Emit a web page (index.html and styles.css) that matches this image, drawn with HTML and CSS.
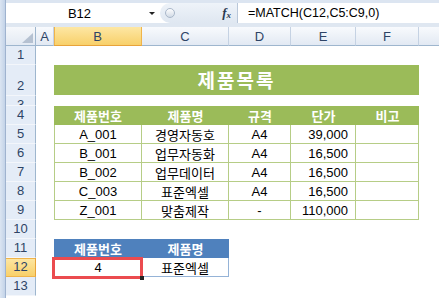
FILE: index.html
```html
<!DOCTYPE html>
<html lang="ko">
<head>
    <meta charset="UTF-8">
    <meta name="viewport" content="width=device-width, initial-scale=1.0">
    <title>제품목록 - MATCH</title>
    <link rel="stylesheet" href="styles.css">
</head>
<body>
    <div class="window">
        <div class="frame-edge"></div>
        <div class="workbook">
            <div class="top-line"></div>
            <div class="formula-bar">
                <div class="name-box">
                    <span class="cell-ref">B12</span>
                    <span class="drop"></span>
                </div>
                <div class="fx-area">
                    <span class="grip"></span>
                    <span class="fx">f<sub>x</sub></span>
                </div>
                <div class="formula-input">=MATCH(C12,C5:C9,0)</div>
            </div>
            <div class="bar-gap"></div>

            <div class="sheet">
                <!-- column headers -->
                <div class="corner"><span class="corner-tri"></span></div>
                <div class="col-head">A</div>
                <div class="col-head selected">B</div>
                <div class="col-head">C</div>
                <div class="col-head">D</div>
                <div class="col-head">E</div>
                <div class="col-head">F</div>
                <div class="col-head last"></div>

                <!-- row 1 -->
                <div class="row-head">1</div>
                <div class="c"></div><div class="c"></div><div class="c"></div><div class="c"></div><div class="c"></div><div class="c"></div><div class="c"></div>

                <!-- row 2 -->
                <div class="row-head">2</div>
                <div class="c"></div>
                <div class="title">제품목록</div>
                <div class="c"></div>

                <!-- row 3 -->
                <div class="row-head short"><span class="clip">3</span></div>
                <div class="c"></div><div class="c"></div><div class="c"></div><div class="c"></div><div class="c"></div><div class="c"></div><div class="c"></div>

                <!-- row 4 -->
                <div class="row-head">4</div>
                <div class="c"></div>
                <div class="th">제품번호</div>
                <div class="th">제품명</div>
                <div class="th">규격</div>
                <div class="th">단가</div>
                <div class="th">비고</div>
                <div class="c"></div>

                <!-- rows 5-9 -->
                <div class="row-head">5</div>
                <div class="c"></div>
                <div class="td first">A_001</div>
                <div class="td">경영자동호</div>
                <div class="td">A4</div>
                <div class="td num">39,000</div>
                <div class="td"></div>
                <div class="c"></div>

                <div class="row-head">6</div>
                <div class="c"></div>
                <div class="td first">B_001</div>
                <div class="td">업무자동화</div>
                <div class="td">A4</div>
                <div class="td num">16,500</div>
                <div class="td"></div>
                <div class="c"></div>

                <div class="row-head">7</div>
                <div class="c"></div>
                <div class="td first">B_002</div>
                <div class="td">업무데이터</div>
                <div class="td">A4</div>
                <div class="td num">16,500</div>
                <div class="td"></div>
                <div class="c"></div>

                <div class="row-head">8</div>
                <div class="c"></div>
                <div class="td first">C_003</div>
                <div class="td">표준엑셀</div>
                <div class="td">A4</div>
                <div class="td num">16,500</div>
                <div class="td"></div>
                <div class="c"></div>

                <div class="row-head">9</div>
                <div class="c"></div>
                <div class="td first">Z_001</div>
                <div class="td">맞춤제작</div>
                <div class="td">-</div>
                <div class="td num">110,000</div>
                <div class="td"></div>
                <div class="c"></div>

                <!-- row 10 -->
                <div class="row-head">10</div>
                <div class="c"></div><div class="c"></div><div class="c"></div><div class="c"></div><div class="c"></div><div class="c"></div><div class="c"></div>

                <!-- row 11 -->
                <div class="row-head">11</div>
                <div class="c"></div>
                <div class="bh">제품번호</div>
                <div class="bh">제품명</div>
                <div class="c"></div><div class="c"></div><div class="c"></div><div class="c"></div>

                <!-- row 12 -->
                <div class="row-head selected">12</div>
                <div class="c"></div>
                <div class="bd active">4<span class="red-box"><span class="handle"></span></span></div>
                <div class="bd outlined">표준엑셀</div>
                <div class="c"></div><div class="c"></div><div class="c"></div><div class="c"></div>

                <!-- row 13 -->
                <div class="row-head">13</div>
                <div class="c"></div><div class="c"></div><div class="c"></div><div class="c"></div><div class="c"></div><div class="c"></div><div class="c"></div>
            </div>
        </div>
    </div>
</body>
</html>
```

FILE: styles.css
```css
body {
    margin: 0;
    padding: 0;
    background: #fff;
    font-family: "Liberation Sans", "Noto Sans CJK KR", sans-serif;
    font-size: 13px;
    color: #000;
    overflow: hidden;
}
.window {
    display: flex;
    width: 439px;
    height: 298px;
    overflow: hidden;
}
.frame-edge {
    width: 5px;
    flex-shrink: 0;
    background: linear-gradient(to right, #dbe5f2, #c3d3e8);
    border-right: 1px solid #9fb3cf;
}
.workbook {
    flex: 1;
    display: flex;
    flex-direction: column;
    min-width: 0;
}
.top-line {
    height: 3px;
    background: #dce5f1;
}
.formula-bar {
    display: flex;
    height: 20px;
    background: #fff;
}
.name-box {
    width: 154px;
    display: flex;
    align-items: center;
    background: #fff;
}
.cell-ref {
    flex: 1;
    text-align: center;
    padding-left: 4px;
}
.drop {
    width: 0;
    height: 0;
    border-left: 3px solid transparent;
    border-right: 3px solid transparent;
    border-top: 3px solid #222;
    margin-right: 5px;
}
.fx-area {
    width: 78px;
    display: flex;
    align-items: center;
    justify-content: space-between;
    padding: 0 6px 0 5px;
    box-sizing: border-box;
    background: linear-gradient(#eef3f9, #dfe7f1);
    border-radius: 10px 0 0 10px;
    border-right: 1px solid #b9c7d9;
}
.grip {
    width: 8px;
    height: 8px;
    border-radius: 50%;
    background: linear-gradient(#fdfdfe, #d2dbe6);
    border: 1px solid #a9b7c9;
}
.fx {
    font-family: "Liberation Serif", serif;
    font-style: italic;
    font-weight: bold;
    font-size: 13px;
    color: #2b3a4f;
}
.fx sub {
    font-size: 9px;
    vertical-align: -1px;
}
.formula-input {
    flex: 1;
    padding-left: 10px;
    font-size: 12.5px;
    line-height: 20px;
    white-space: nowrap;
}
.bar-gap {
    height: 4px;
    background: #dfe7f1;
}

.sheet {
    display: grid;
    grid-template-columns: 30px 18px 88px 87px 62px 65px 63px 1fr;
    grid-template-rows: 19px 19px 31px 10px repeat(10, 19px);
    position: relative;
}
.sheet > div {
    box-sizing: border-box;
    min-width: 0;
}
.corner {
    position: relative;
    background: linear-gradient(#f6f8fb, #e3eaf3);
    border-right: 1px solid #9eb6ce;
    border-bottom: 1px solid #9eb6ce;
}
.corner-tri {
    position: absolute;
    right: 2px;
    bottom: 2px;
    width: 0;
    height: 0;
    border-left: 11px solid transparent;
    border-bottom: 10px solid #b5c1d1;
}
.col-head {
    display: flex;
    align-items: center;
    justify-content: center;
    background: linear-gradient(#f8fafd, #e2e9f3);
    border-right: 1px solid #c5d2e3;
    border-bottom: 1px solid #9eb6ce;
    color: #2e4466;
}
.col-head.selected {
    background: linear-gradient(#fde7a4, #f8d06a);
    border-right-color: #f0b44a;
    border-bottom-color: #e8a33a;
    box-shadow: inset 1px 0 0 #f0b44a;
}
.col-head.last {
    border-right: none;
}
.row-head {
    display: flex;
    align-items: flex-end;
    justify-content: center;
    line-height: 18px;
    background: #e4ecf7;
    border-right: 1px solid #9eb6ce;
    border-bottom: 1px solid #f3f6fb;
    color: #2e4466;
    overflow: hidden;
}
.row-head.short {
    align-items: flex-start;
}
.row-head .clip {
    display: block;
    height: 9px;
    line-height: 17px;
    overflow: hidden;
}
.row-head.selected {
    background: linear-gradient(#fde7a4, #f8d06a);
    border-right-color: #e8a33a;
    border-bottom-color: #f0b44a;
    box-shadow: inset 0 1px 0 #f0b44a;
}

.title {
    grid-column: span 5;
    display: flex;
    align-items: center;
    justify-content: center;
    background: #9bbb59;
    border-bottom: 1px solid #fff;
    color: #fff;
    font-size: 19px;
    font-weight: bold;
    letter-spacing: 2px;
    padding-bottom: 2px;
}
.th {
    display: flex;
    align-items: center;
    justify-content: center;
    background: #9bbb59;
    color: #fff;
    font-weight: bold;
}
.td {
    display: flex;
    align-items: center;
    justify-content: center;
    border-right: 1px solid #b6cd86;
    border-bottom: 1px solid #b6cd86;
}
.td.first {
    border-left: 1px solid #b6cd86;
}
.td.num {
    justify-content: flex-end;
    padding-right: 7px;
}
.bh {
    display: flex;
    align-items: center;
    justify-content: center;
    background: #4f81bd;
    color: #fff;
    font-weight: bold;
}
.bd {
    display: flex;
    align-items: center;
    justify-content: center;
}
.bd.outlined {
    border-right: 1px solid #95b3d7;
    border-bottom: 1px solid #95b3d7;
}
.bd.active {
    position: relative;
}
.red-box {
    position: absolute;
    top: -1px;
    left: -2px;
    right: -1px;
    bottom: -2px;
    border: 3px solid #eb4b4f;
}
.handle {
    position: absolute;
    right: -4px;
    bottom: -4px;
    width: 4px;
    height: 4px;
    background: #222;
}
```
